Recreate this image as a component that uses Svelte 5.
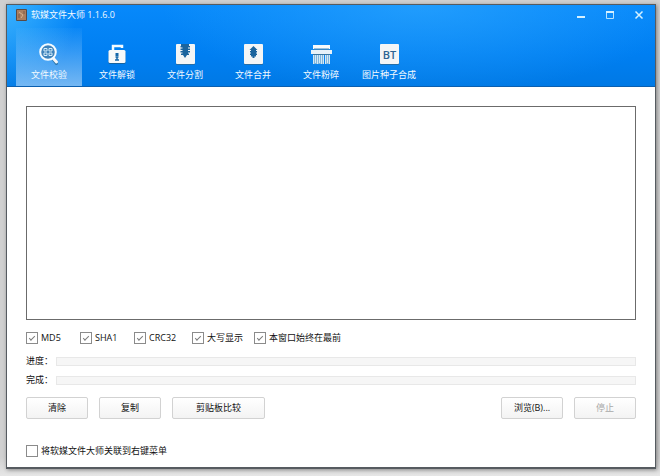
<script lang="ts">
  type Icon = "verify" | "unlock" | "split" | "merge" | "shred" | "torrent";

  const tabs: { icon: Icon; label: string }[] = [
    { icon: "verify", label: "文件校验" },
    { icon: "unlock", label: "文件解锁" },
    { icon: "split", label: "文件分割" },
    { icon: "merge", label: "文件合并" },
    { icon: "shred", label: "文件粉碎" },
    { icon: "torrent", label: "图片种子合成" },
  ];

  let active = $state<Icon>("verify");
  let output = $state("");
  let linked = $state(false);

  let options = $state([
    { label: "MD5", checked: true },
    { label: "SHA1", checked: true },
    { label: "CRC32", checked: true },
    { label: "大写显示", checked: true },
    { label: "本窗口始终在最前", checked: true },
  ]);
</script>

{#snippet sheet()}
  <rect x="3" y="3" width="19" height="20" rx="1" fill="#236da7" />
  <rect x="3" y="2" width="19" height="20" rx="1" fill="#f3f5f6" />
{/snippet}

<div class="desktop">
  <main class="window">
    <header class="header">
      <div class="titlebar">
        <svg class="titlebar__logo" viewBox="0 0 11 12" aria-hidden="true">
          <rect width="11" height="12" rx="1" fill="#5b4a43" />
          <rect x="1" y="1" width="9" height="10" fill="#a97f60" />
          <path d="M3 3l4 3-2 3" fill="none" stroke="#d6b490" />
          <path d="M3 5v4M8 2v3" stroke="#7d5c49" />
        </svg>
        <h1 class="titlebar__title">软媒文件大师 1.1.6.0</h1>
        <div class="titlebar__controls">
          <button type="button" aria-label="最小化">
            <svg viewBox="0 0 10 10"><path d="M1 7h8" stroke="#d5f1ff" stroke-width="2" /></svg>
          </button>
          <button type="button" aria-label="最大化">
            <svg viewBox="0 0 10 10">
              <path d="M1.5 2v6.5h7V2" fill="none" stroke="#b5e2ff" />
              <path d="M1 2h8" stroke="#d5f1ff" stroke-width="2" />
            </svg>
          </button>
          <button type="button" aria-label="关闭">
            <svg viewBox="0 0 10 10">
              <path d="m1.5 1.5 7 7m0-7-7 7" stroke="#d5f1ff" stroke-width="1.5" />
            </svg>
          </button>
        </div>
      </div>

      <nav class="tabs">
        {#each tabs as tab (tab.icon)}
          <button
            type="button"
            class="tab"
            class:tab--active={active === tab.icon}
            onclick={() => { active = tab.icon; }}
          >
            <svg class="tab__icon" viewBox="0 0 24 24" aria-hidden="true">
              {#if tab.icon === "verify"}
                <path d="m16.5 17.5 3 4" stroke="#2c76ab" stroke-width="3" stroke-linecap="round" />
                <path d="m15.5 15.5 4 4.5" stroke="#f5f7f9" stroke-width="3" stroke-linecap="round" />
                <circle cx="11" cy="10" r="7.8" fill="#3f83bb" stroke="#f5fbff" stroke-width="2" />
                <path
                  d="M7 6.500h3v2.500h-3zM12 6.500h3v2.500h-3zM7 11h3v2.500h-3zM12 11h3v2.500h-3z"
                  fill="none"
                  stroke="#d4ecfa"
                />
              {:else if tab.icon === "unlock"}
                <rect x="3.5" y="9" width="17" height="13" rx="1.5" fill="#16639f" />
                <path d="M8 9V4h9v2" fill="none" stroke="#f4fbff" stroke-width="2.5" />
                <rect x="3.5" y="8" width="17" height="13" rx="1.5" fill="#f7f9fa" />
                <rect x="10.5" y="11" width="3" height="3" fill="#1668aa" />
                <path d="M10.5 15h3M12 15v3M10 18h4" stroke="#1668aa" stroke-width="1.5" />
              {:else if tab.icon === "split"}
                {@render sheet()}
                <path
                  d="M8 2h8v2h1v1.5h-2v1h2V8h-2v1h2v1.5h-2v1h1V13h-2l-2 3-2-3H8v-1.500h1.500v-1H7.500V9h2V8h-2V6.500h2v-1h-2V4H8z"
                  fill="#1c649d"
                />
              {:else if tab.icon === "merge"}
                {@render sheet()}
                <path
                  d="m12.500 4 4 4h-1.500v1h1v1.500h-1v1h1V13h-1v1.500h-1.500V16h-2v-1.500H10V13H9v-1.500h1v-1H9V9h1V8H8.500z"
                  fill="#1c649d"
                />
              {:else if tab.icon === "shred"}
                <path d="M4 3h17v4H4z" fill="#f8fbfc" />
                <path d="M5 6.500h15V8H5z" fill="#3a87c3" />
                <rect x="2" y="8" width="21" height="4" fill="#e7f2f9" />
                <path d="M4 12h17v1H4z" fill="#3a759f" />
                <path d="M4 13h11v9H4zM16 13h5v9h-5z" fill="#7fb5dc" />
                <path
                  d="M4.500 13v9M6.500 13v8M8.500 13v9M10.500 13v8M12.500 13v9M14.500 13v9M16.500 13v9M18.500 13v8M20.500 13v9"
                  stroke="#d3e8f5"
                />
              {:else}
                {@render sheet()}
                <text class="tab__letters" x="12.5" y="16.5" text-anchor="middle">BT</text>
              {/if}
            </svg>
            <span>{tab.label}</span>
          </button>
        {/each}
      </nav>
    </header>

    <section class="panel">
      <textarea class="output" aria-label="校验结果" bind:value={output}></textarea>

      <div class="options">
        {#each options as option (option.label)}
          <label class="check">
            <input type="checkbox" bind:checked={option.checked} />
            <span>{option.label}</span>
          </label>
        {/each}
      </div>

      <div class="progress">
        <label for="current">进度：</label>
        <progress id="current" value="0" max="100"></progress>
        <label for="total">完成：</label>
        <progress id="total" value="0" max="100"></progress>
      </div>

      <div class="actions">
        <button type="button" class="btn" onclick={() => { output = ""; }}>清除</button>
        <button type="button" class="btn">复制</button>
        <button type="button" class="btn btn--wide">剪贴板比较</button>
        <span class="actions__space"></span>
        <button type="button" class="btn">浏览(B)...</button>
        <button type="button" class="btn" disabled>停止</button>
      </div>

      <label class="check">
        <input type="checkbox" bind:checked={linked} />
        <span>将软媒文件大师关联到右键菜单</span>
      </label>
    </section>
  </main>
</div>

<style>
  :global(body) {
    background: #d3d3d3;
  }

  .desktop {
    box-sizing: border-box;
    display: flex;
    min-height: 100vh;
    padding: 4px 4px 7px 6px;
    background: linear-gradient(to bottom, #d0d0d0 96%, #e6e6e6);
    font-family: "Open Sans", "Noto Sans CJK SC", sans-serif;
    font-size: 9px;
    line-height: 12px;
    color: #111;
  }

  .window {
    flex: 1;
    display: flex;
    flex-direction: column;
    min-width: 0;
    background: #fff;
    border: 1px solid #565b60;
    border-bottom-width: 2px;
    box-shadow: 1px 1px 4px rgba(0, 0, 0, 0.4);
  }

  button,
  textarea {
    font: inherit;
    color: inherit;
  }

  .header {
    color: #f2faff;
    background:
      radial-gradient(ellipse 70px 90px at 0 0, rgba(80, 195, 255, 0.7), transparent),
      radial-gradient(ellipse 260px 90px at 64% 0, rgba(50, 170, 255, 0.6), transparent),
      linear-gradient(to bottom, #0789fb, #007ff2 60%, #0079e5);
    border-bottom: 1px solid #0b5faf;
  }

  .titlebar {
    display: flex;
    align-items: center;
    gap: 4px;
    height: 20px;
    padding: 0 2px 0 9px;
  }

  .titlebar__logo {
    width: 11px;
    height: 12px;
  }

  .titlebar__title {
    flex: 1;
    margin: 0;
    font-size: 9px;
    font-weight: 400;
  }

  .titlebar__controls {
    display: flex;
  }

  .titlebar__controls button {
    display: flex;
    justify-content: center;
    width: 29px;
    padding: 4px 0;
    border: 0;
    background: none;
  }

  .titlebar__controls svg {
    width: 10px;
    height: 10px;
  }

  .tabs {
    display: flex;
    gap: 2px;
    padding: 3px 9px 0;
  }

  .tab {
    display: flex;
    flex-direction: column;
    align-items: center;
    gap: 3px;
    width: 66px;
    padding: 14px 0 5px;
    border: 0;
    background: none;
    white-space: nowrap;
  }

  .tab--active {
    background: linear-gradient(to bottom, rgba(140, 200, 245, 0.05), rgba(165, 210, 250, 0.7));
  }

  .tab__icon {
    width: 24px;
    height: 24px;
  }

  .tab__letters {
    font-family: "Open Sans", sans-serif;
    font-size: 11px;
    font-weight: 600;
    fill: #2b6391;
  }

  .panel {
    flex: 1;
    display: flex;
    flex-direction: column;
    padding: 19px 19px 10px;
  }

  .output {
    flex: 1;
    box-sizing: border-box;
    width: 100%;
    margin: 0 0 12px;
    padding: 4px;
    border: 1px solid #6b6b6b;
    border-radius: 0;
    background: #fff;
    outline: none;
    resize: none;
  }

  .options {
    display: grid;
    grid-template-columns: 54px 54px 58px 62px auto;
    margin-bottom: 11px;
  }

  .check {
    display: flex;
    align-items: center;
    gap: 3px;
    white-space: nowrap;
  }

  .check input {
    appearance: none;
    display: grid;
    place-items: center;
    box-sizing: border-box;
    width: 12px;
    height: 12px;
    margin: 0;
    border: 1px solid #8b8b8b;
    background: #fff;
  }

  .check input:checked::before {
    content: "";
    width: 5px;
    height: 2px;
    margin-bottom: 2px;
    border: solid #7b7b7b;
    border-width: 0 0 1px 1px;
    transform: rotate(-45deg);
  }

  .progress {
    display: grid;
    grid-template-columns: 27px 1fr;
    align-items: center;
    gap: 7px 3px;
    margin-bottom: 11px;
    white-space: nowrap;
  }

  progress {
    appearance: none;
    box-sizing: border-box;
    width: 100%;
    height: 9px;
    border: 1px solid #e8e8e8;
    background: #f6f6f6;
  }

  progress::-webkit-progress-bar {
    background: #f6f6f6;
  }

  progress::-webkit-progress-value {
    background: #2d9bf3;
  }

  .actions {
    display: flex;
    gap: 11px;
    margin-bottom: 26px;
  }

  .actions__space {
    flex: 1;
  }

  .btn {
    box-sizing: border-box;
    width: 62px;
    height: 22px;
    padding: 0;
    border: 1px solid #d2d2d2;
    border-radius: 2px;
    background: linear-gradient(to bottom, #fff, #f3f3f3);
    white-space: nowrap;
  }

  .btn--wide {
    width: 93px;
  }

  .btn:disabled {
    color: #a8a8a8;
  }
</style>
